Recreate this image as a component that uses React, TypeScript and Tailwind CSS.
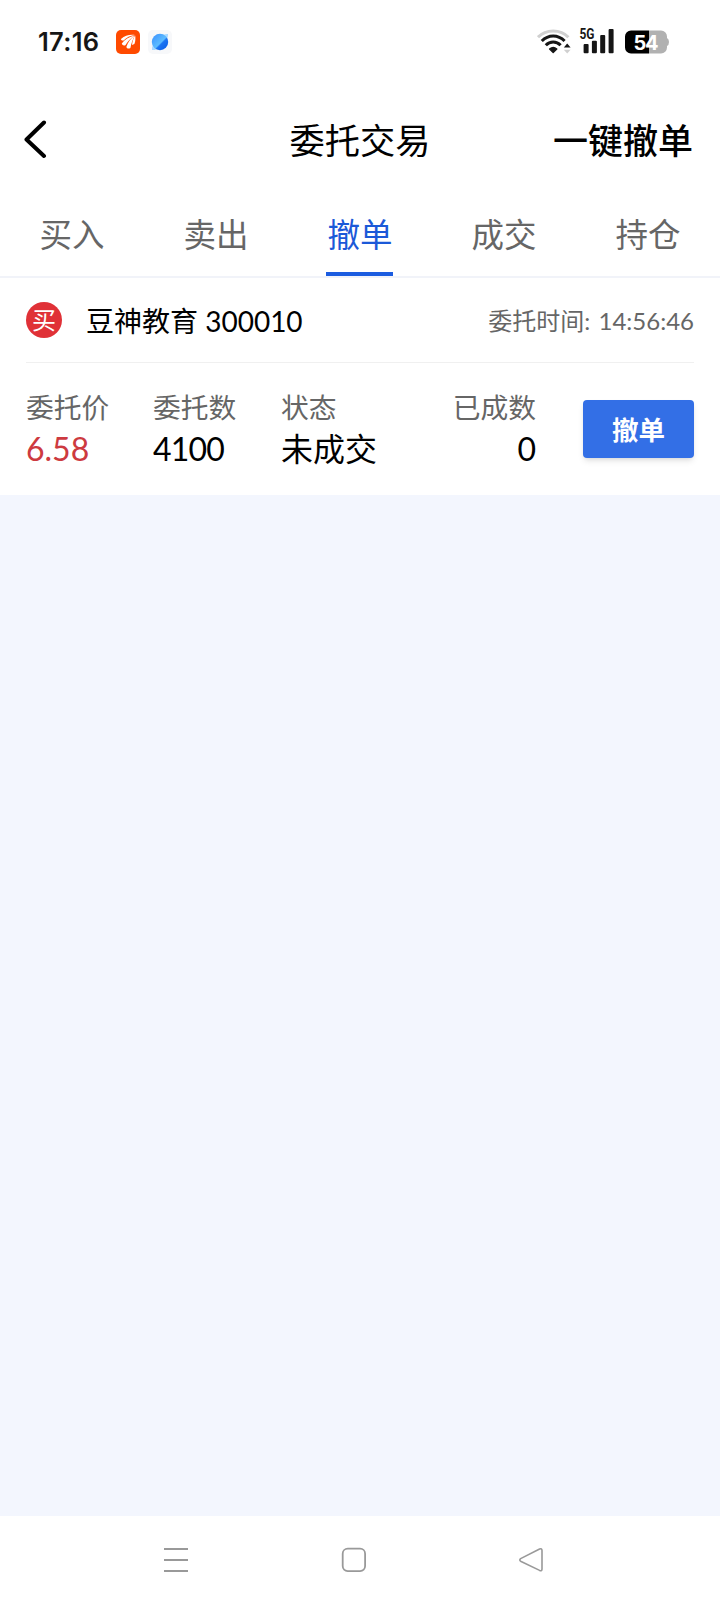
const TABS = ['买入', '卖出', '撤单', '成交', '持仓'];
const ACTIVE_TAB = '撤单';

function StatusBar() {
  return (
    <div className="flex h-[84px] shrink-0 items-center pl-[38px] pr-[51px]">
      <span className="w-[62px] whitespace-nowrap font-['Inter',sans-serif] text-[25.5px] leading-none font-semibold tracking-[0.3px] text-[#161616]">
        17:16
      </span>

      {/* Notification icons */}
      <svg className="ml-4" width="24" height="24" viewBox="0 0 24 24">
        <rect width="24" height="24" rx="5" fill="#ff4a00" />
        <path d="M5 9C9 5.4 13.4 4.4 19 5C14 5.8 10.6 7.4 7.6 10.4C6 10.8 5 10.2 5 9Z" fill="#fff" />
        <path d="M5.8 13.6C8.6 9.4 13 6.6 18.6 5.4C14.4 8.2 11.8 11.2 9.4 15.2C7.4 16 6 15 5.8 13.6Z" fill="#fff" />
        <path d="M10.4 16.8C12 12.2 14.6 8.4 18.8 5.6C16.6 9.6 15.4 13.4 14.4 18C12.4 19.2 10.4 18.4 10.4 16.8Z" fill="#fff" />
        <path d="M16 15C16.4 11 17.4 8 19.2 5.4C19.6 8.4 19.4 11.4 18.4 14Z" fill="#fff" />
      </svg>
      <svg className="ml-2" width="24" height="24" viewBox="0 0 24 24">
        <defs>
          <linearGradient id="ball" x1="0" y1="0" x2="1" y2="1">
            <stop offset="0.1" stopColor="#3f97ff" />
            <stop offset="0.54" stopColor="#5cbcff" />
            <stop offset="0.6" stopColor="#1b74f2" />
            <stop offset="1" stopColor="#0a5ce6" />
          </linearGradient>
        </defs>
        <rect width="24" height="24" rx="5" fill="#f7f8fa" />
        <path d="M4 20C3.6 17.4 5 14 7 12L12 17C9.4 19.4 6.4 20.4 4 20ZM20 4C20.4 6.6 19 10 17 12L12 7C14.6 4.6 17.6 3.6 20 4Z" fill="#a9d8ff" />
        <circle cx="12" cy="12" r="8.2" fill="url(#ball)" />
      </svg>

      <div className="ml-auto flex items-center">
        <svg width="34" height="28" viewBox="0 0 34 28" fill="none">
          <path d="M1 9.2C9 0.8 23.4 0.8 31.4 9.2" stroke="#d0d0d0" strokeWidth="3" />
          <path d="M4.8 13C11.4 6.2 21 6.2 27.6 13" stroke="#161616" strokeWidth="3" />
          <path d="M8.8 17.2C13 12.8 19.4 12.8 23.6 17.2" stroke="#161616" strokeWidth="3" />
          <path d="M12.6 21C14.8 19.2 17.6 19.2 19.8 21L16.2 24.4Z" fill="#161616" stroke="#161616" strokeWidth="1.4" strokeLinejoin="round" />
          <path d="M30.2 15.6L33.6 19.4H26.8Z" fill="#161616" />
          <path d="M30.2 25.6L33.6 21.8H26.8Z" fill="#d0d0d0" />
        </svg>
        <svg className="ml-2 overflow-visible" width="36" height="28" viewBox="0 0 36 28">
          <text x="0.5" y="10.6" fontFamily="Roboto, sans-serif" fontSize="14" fontWeight="700" textLength="15" lengthAdjust="spacingAndGlyphs" fill="#161616">5G</text>
          <rect x="4.6" y="16" width="5" height="9.3" rx="1" fill="#161616" />
          <rect x="12.9" y="12.8" width="5" height="12.5" rx="1" fill="#161616" />
          <rect x="21.2" y="7" width="5" height="18.3" rx="1" fill="#161616" />
          <rect x="29.6" y="1" width="5" height="24.3" rx="1" fill="#161616" />
        </svg>
        <svg className="ml-[10px] overflow-visible" width="44" height="24" viewBox="0 0 44 24">
          <path d="M24 0.5H36A6 6 0 0 1 42 6.5V8Q44 9 44 12Q44 15 42 16V17.5A6 6 0 0 1 36 23.5H24Z" fill="#b1b1b1" />
          <path d="M24 0.5H6A6 6 0 0 0 0 6.5V17.5A6 6 0 0 0 6 23.5H24Z" fill="#000" />
          <text x="8.5" y="19.6" fontFamily="Inter, sans-serif" fontSize="20" fontWeight="700" textLength="25" fill="#fff">54</text>
        </svg>
      </div>
    </div>
  );
}

function Header() {
  return (
    <header className="grid h-[112px] shrink-0 grid-cols-3 items-center px-[27px] text-[35.5px] leading-[52px] text-black">
      <svg className="-ml-[4px]" width="24" height="40" viewBox="0 0 24 40" fill="none">
        <path d="M21 2.5L3.5 19.5L21 36" stroke="#000" strokeWidth="4" strokeLinecap="round" strokeLinejoin="round" />
      </svg>
      <h1 className="pt-0.5 text-center text-[35.25px] whitespace-nowrap">委托交易</h1>
      <button className="pb-px text-right text-[35px] font-medium whitespace-nowrap">一键撤单</button>
    </header>
  );
}

function Tabs() {
  return (
    <nav className="flex h-[82px] shrink-0 border-b-2 border-[#f1f3f9]">
      {TABS.map((tab) => (
        <button
          key={tab}
          className={`flex flex-1 flex-col items-center justify-between pt-[15px] text-[32.5px] leading-[48px] ${
            tab === ACTIVE_TAB ? 'text-[#1b59d8]' : 'text-[#666]'
          }`}
        >
          <span>{tab}</span>
          {tab === ACTIVE_TAB && <span className="h-1 w-[67px] -translate-x-px bg-[#1b5ce0]" />}
        </button>
      ))}
    </nav>
  );
}

function Field({ label, value, className = '', valueClass = 'text-black' }: { label: string; value: string; className?: string; valueClass?: string }) {
  return (
    <div className={`flex flex-col whitespace-nowrap ${className}`}>
      <span className="text-[27.75px] leading-[42px] text-[#666]">{label}</span>
      <span className={`text-[32px] leading-[40px] ${valueClass}`}>{value}</span>
    </div>
  );
}

function OrderCard() {
  return (
    <section className="h-[217px] shrink-0 bg-white px-[26px]">
      <div className="flex h-[85px] items-center border-b border-[#f0f0f0]">
        <span className="flex size-9 items-center justify-center rounded-full bg-[#e03137] text-[24px] leading-none text-white">买</span>
        <span className="ml-6 pt-px text-[28px] leading-[42px] text-black">豆神教育 300010</span>
        <span className="ml-auto pt-px text-[24px] leading-[36px] text-[#666]">
          委托时间: <span className="ml-0.5">14:56:46</span>
        </span>
      </div>
      <div className="flex pt-[24px]">
        <Field label="委托价" value="6.58" className="w-[127px]" valueClass="text-[#cd3a40]" />
        <Field label="委托数" value="4100" className="w-[128px]" valueClass="tracking-[-0.8px] text-black" />
        <Field label="状态" value="未成交" className="w-[128px]" />
        <Field label="已成数" value="0" className="w-[127px] items-end" />
        <button className="mt-[13px] ml-auto h-[58px] w-[111px] rounded bg-[#336fe6] pt-[3px] text-[26.5px] font-bold text-white shadow-md">撤单</button>
      </div>
    </section>
  );
}

function NavBar() {
  return (
    <footer className="flex h-[88px] shrink-0 items-center justify-between bg-white pr-[176px] pl-[163px]">
      <svg width="26" height="26" viewBox="0 0 26 26" stroke="#999" strokeWidth="2">
        <path d="M1 2H25M1 13H25M1 24H25" />
      </svg>
      <svg width="26" height="26" viewBox="0 0 26 26" fill="none" stroke="#999" strokeWidth="1.8">
        <rect x="1.7" y="1.7" width="22.4" height="22.4" rx="5" />
      </svg>
      <svg width="26" height="26" viewBox="0 0 26 26" fill="none" stroke="#999" strokeWidth="1.6" strokeLinejoin="round">
        <path d="M2.6 11.6L21.6 2Q24 1.2 24 3.6V22Q24 24.4 21.6 23.4L2.6 14.2Q1 13 2.6 11.6Z" />
      </svg>
    </footer>
  );
}

export default function App() {
  return (
    <div className="flex h-[1604px] w-[720px] flex-col bg-white font-['Lato','Noto_Sans_CJK_SC',sans-serif]">
      <StatusBar />
      <Header />
      <Tabs />
      <main className="flex flex-1 flex-col bg-[#f3f6fe]">
        <OrderCard />
      </main>
      <NavBar />
    </div>
  );
}
